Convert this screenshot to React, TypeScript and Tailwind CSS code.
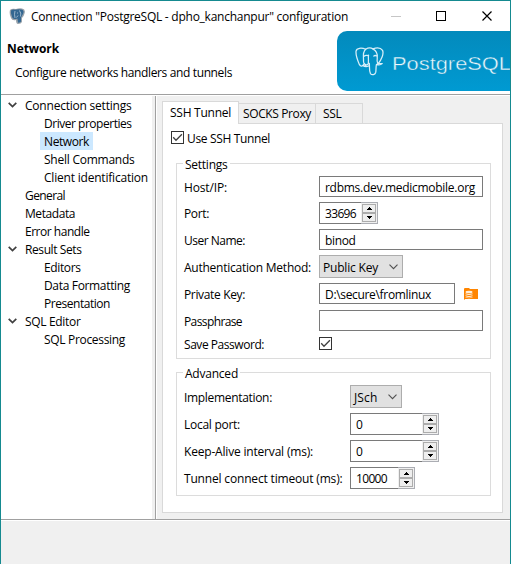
import { useLayoutEffect, useRef, useState, type ReactNode } from "react";

/** A run of text tracked so that it fills exactly `width` pixels. */
function Text({ children, width, className = "" }: { children: string; width: number; className?: string }) {
  const ref = useRef<HTMLSpanElement>(null);
  const [tracking, setTracking] = useState(0);
  useLayoutEffect(() => {
    if (ref.current) {
      const natural = ref.current.getBoundingClientRect().width;
      setTracking((width - natural) / children.length);
    }
  }, []);
  return (
    <span ref={ref} className={`inline-block shrink-0 pt-[2px] whitespace-pre ${className}`} style={{ letterSpacing: `${tracking}px` }}>
      {children}
    </span>
  );
}

function Elephant({ className }: { className: string }) {
  return (
    <svg viewBox="0 0 30 30" className={className} fill="none" stroke="currentColor" strokeWidth="1.3" strokeLinecap="round" strokeLinejoin="round">
      <path d="M9.500 17.500c-1.500 2.500-3.600 3.300-5 .5C2.500 13.500.7 7.500 1.100 4.200 1.700.8 7 .6 11 2.300c2-1.200 5.500-1.600 7.500-.4 3.500-1.300 8-1.300 10 1.600 1.600 3.500-1.300 10-4.800 14.200" />
      <path d="M11 2.300C8 5 8.500 9 8.800 12.500c.2 3-.8 4 1.500 5.500 1.500 1 3.500.5 3.500-1.500.4-3-.3-5.500.2-8M18.500 1.900c3.500 2 5 6 4.500 9.500-.4 2-.2 4 .7 6.300M9 9.800c1.500-1.300 3-1.500 5-.8M19.500 9.300c1-.8 2-.6 3 0M14.800 17c.5 3.500-.4 7.500 1.200 10.500 1.500 2 5 1.300 5.500-1.500.4-3 .1-6 .7-8 2 .7 4.500.5 6-.8-1.700.1-3.500.1-4.500-.6M12 18.500c-1 1.200-2.500 1-3.500.8 1.500 1.300 4.500 1.500 6.500-.3" />
    </svg>
  );
}

function Chevron() {
  return (
    <svg viewBox="0 0 9 6" className="h-[6px] w-[9px]" fill="none" stroke="#404040" strokeWidth="1.7">
      <path d="M.7 .8 4.500 4.500 8.300 .8" />
    </svg>
  );
}

function TreeItem({ label, width, open = false, child = false, selected = false }: { label: string; width: number; open?: boolean; child?: boolean; selected?: boolean }) {
  return (
    <div className="flex h-[18px] items-center">
      <div className={`flex shrink-0 ${child ? "w-[39px]" : "w-[21px]"} pl-[7px]`}>{open && <Chevron />}</div>
      <div className={`flex h-[18px] items-center ${child ? "px-1" : "pl-[3px]"} ${selected ? "bg-[#cce8ff]" : ""}`}>
        <Text width={width}>{label}</Text>
      </div>
    </div>
  );
}

function Check() {
  return (
    <svg viewBox="0 0 13 13" className="size-[13px] shrink-0">
      <rect x=".5" y=".5" width="12" height="12" fill="#fff" stroke="#333" />
      <path d="M2.200 6.300 5 9.200 10.900 3.300" fill="none" stroke="#404040" strokeWidth="1.300" />
    </svg>
  );
}

function Group({ title, titleWidth, className, children }: { title: string; titleWidth: number; className: string; children: ReactNode }) {
  return (
    <div className={`relative flex w-[315px] flex-col border border-[#dcdcdc] pl-[7px] ${className}`}>
      <div className="absolute -top-[9px] left-[6px] flex h-[18px] items-center bg-white pr-[2px] pl-[2px]">
        <Text width={titleWidth}>{title}</Text>
      </div>
      {children}
    </div>
  );
}

function Row({ label, width, className, wide = false, children }: { label: string; width: number; className: string; wide?: boolean; children: ReactNode }) {
  return (
    <div className={`flex items-center ${className}`}>
      <div className={`flex shrink-0 ${wide ? "w-[166px]" : "w-[135px]"}`}>
        <Text width={width}>{label}</Text>
      </div>
      {children}
    </div>
  );
}

function Field({ value = "", width = 0, className }: { value?: string; width?: number; className: string }) {
  return (
    <div className={`flex h-[21px] items-center border border-[#7a7a7a] bg-white pl-[5px] ${className}`}>
      {value && <Text width={width}>{value}</Text>}
    </div>
  );
}

function Spinner({ value, width, className }: { value: string; width: number; className: string }) {
  return (
    <div className={`flex h-[22px] ${className}`}>
      <div className="flex grow items-center border border-r-0 border-[#7a7a7a] pl-[5px]">
        <Text width={width}>{value}</Text>
      </div>
      <div className="flex w-[17px] flex-col border border-l-0 border-[#abadb3] bg-[#f0f0f0] pt-px pl-px">
        <div className="flex h-[9px] w-[14px] items-center justify-center border border-[#acacac] bg-[#eeeeee]">
          <svg viewBox="0 0 5 3" className="h-[3px] w-[5px]" shapeRendering="crispEdges"><path d="M2 0h1v1h1v1h1v1H0V2h1V1h1z" /></svg>
        </div>
        <div className="flex h-[9px] w-[14px] items-center justify-center border border-[#acacac] bg-[#eeeeee]">
          <svg viewBox="0 0 5 3" className="h-[3px] w-[5px]" shapeRendering="crispEdges"><path d="M0 0h5v1H4v1H3v1H2V2H1V1H0z" /></svg>
        </div>
      </div>
    </div>
  );
}

function Select({ value, width, className }: { value: string; width: number; className: string }) {
  return (
    <div className={`flex h-[23px] items-center justify-between border border-[#adadad] bg-[#e1e1e1] pr-1 pl-[3px] ${className}`}>
      <Text width={width}>{value}</Text>
      <svg viewBox="0 0 9 6" className="h-[6px] w-[9px]" fill="none" stroke="#505050" strokeWidth="1.100">
        <path d="M.5 .7 4.500 4.700 8.500 .7" />
      </svg>
    </div>
  );
}

export default function App() {
  return (
    <div className="flex h-[564px] w-[511px] flex-col overflow-hidden border-x border-t border-[#158a90] bg-white font-['Open_Sans','Noto_Sans',sans-serif] text-[12px] leading-[18px] text-black">
      <header className="flex h-[30px] shrink-0 items-center pl-2">
        <svg viewBox="0 0 16 16" className="size-4 shrink-0">
          <path d="M1 2Q3 0 7 1q3-1 6-.5 4 1 2.500 5Q15 8 13 10v4q-1 2-4 2-2 0-2-4-4 1-5-2Q0 6 1 2Z" fill="#9aa3ab" />
          <path d="M2 2.500Q4 .8 6 1.800 9 .7 12.500 1.500q3 .8 1.700 4L12 9.500v4q-1 1.500-3 1l-.6-4Q4 12 3 9 1.300 5 2 2.500Z" fill="#336791" />
          <path d="M6 3q-1 3 0 7M10.500 2.500q2 3 1 6M7.500 9.500l1.500-2M8 5h1M11 5h1" fill="none" stroke="#b4c8d8" strokeWidth=".8" />
        </svg>
        <Text width={317} className="ml-[6px]">Connection "PostgreSQL - dpho_kanchanpur" configuration</Text>
        <svg viewBox="0 0 102 12" className="ml-[43px] h-3 w-[102px] shrink-0" fill="none" stroke="#000">
          <path d="M0 6.500h10" stroke="#c6c6c6" />
          <rect x="45.500" y="1.500" width="9" height="9" />
          <path d="M91.500 1.500l9 9M100.500 1.500l-9 9" strokeWidth="1.200" />
        </svg>
      </header>
      <section className="flex h-[63px] shrink-0 justify-between">
        <div className="flex flex-col pt-[7px] pl-[6px]">
          <Text width={52} className="self-start font-bold">Network</Text>
          <Text width={217} className="mt-[4px] ml-2 self-start">Configure networks handlers and tunnels</Text>
        </div>
        <div className="flex h-[60px] w-[173px] items-start rounded-l-[10px] bg-linear-to-b from-[#038abc] to-[#009ad2] pt-4 pl-[18px] text-[#d8eff9]">
          <Elephant className="size-[29px] shrink-0" />
          <svg viewBox="0 0 117 29" className="ml-[8px] h-[29px] w-[117px] shrink-0 overflow-visible">
            <text x="0" y="23" textLength="119" lengthAdjust="spacingAndGlyphs" fill="#eef9fd" stroke="#0392c6" strokeWidth=".4" className="font-['Liberation_Sans',sans-serif] text-[18px]">PostgreSQL</text>
          </svg>
        </div>
      </section>
      <main className="flex h-[426px] shrink-0 border-y border-[#a0a0a0]">
        <nav className="w-[151px] shrink-0 pt-px">
          <TreeItem label="Connection settings" width={106.500} open />
          <TreeItem label="Driver properties" width={87.500} child />
          <TreeItem label="Network" width={45} child selected />
          <TreeItem label="Shell Commands" width={90.500} child />
          <TreeItem label="Client identification" width={104} child />
          <TreeItem label="General" width={40} />
          <TreeItem label="Metadata" width={50} />
          <TreeItem label="Error handle" width={64.500} />
          <TreeItem label="Result Sets" width={56.500} open />
          <TreeItem label="Editors" width={36.500} child />
          <TreeItem label="Data Formatting" width={86} child />
          <TreeItem label="Presentation" width={66} child />
          <TreeItem label="SQL Editor" width={55.500} open />
          <TreeItem label="SQL Processing" width={81} child />
        </nav>
        <div className="mt-px w-[4px] shrink-0 border-r border-[#a0a0a0] bg-[#f0f0f0]" />
        <div className="mt-px ml-px flex grow flex-col bg-[#f0f0f0] pt-[5px] pl-[5px]">
          <div className="z-10 flex h-[23px] items-end">
            <div className="flex h-[23px] w-[77px] justify-start border border-b-0 border-[#d9d9d9] bg-white pl-[7px]">
              <Text width={61}>SSH Tunnel</Text>
            </div>
            <div className="mb-px flex h-[20px] w-[77px] border-t border-r border-[#d9d9d9] pl-1">
              <Text width={68} className="-mt-px">SOCKS Proxy</Text>
            </div>
            <div className="mb-px flex h-[20px] w-[47px] border-t border-r border-[#d9d9d9] pl-[7px]">
              <Text width={18.500} className="-mt-px">SSL</Text>
            </div>
          </div>
          <div className="-mt-px flex h-[390px] w-[341px] flex-col border border-[#d9d9d9] bg-white pt-[7px] pl-2">
            <div className="flex h-[13px] items-center gap-[3px]">
              <Check />
              <Text width={83}>Use SSH Tunnel</Text>
            </div>
            <Group title="Settings" titleWidth={42.500} className="mt-[19px] ml-[5px] h-[196px] pt-3">
              <Row label="Host/IP:" width={43} className="h-[21px]"><Field value="rdbms.dev.medicmobile.org" width={150} className="w-[164px]" /></Row>
              <Row label="Port:" width={25} className="mt-[5px] h-[22px]"><Spinner value="33696" width={31} className="w-[59px]" /></Row>
              <Row label="User Name:" width={61} className="mt-[5px] h-[21px]"><Field value="binod" width={30.500} className="w-[164px]" /></Row>
              <Row label="Authentication Method:" width={127} className="mt-[5px] h-[23px]"><Select value="Public Key" width={55} className="w-[84px]" /></Row>
              <Row label="Private Key:" width={61} className="mt-[5px] h-[21px]">
                <Field value="D:\secure\fromlinux" width={106} className="w-[136px]" />
                <svg viewBox="0 0 14 12" className="ml-[9px] h-3 w-[14px] shrink-0">
                  <path d="M0 1.200Q0 0 1 0h4l1 1h8v10H1.200L0 12Z" fill="#ff8500" />
                  <g fill="#fff0dc">
                    <ellipse cx="5" cy="4" rx="3.500" ry="1.300" />
                    <path d="M1.500 5.300q3.500 1.400 7 0v1q-3.500 1.400-7 0zM1.500 7.200q3.500 1.400 7 0v1q-3.500 1.400-7 0zM1.500 9q3.500 1.400 7 0v.6q-3.500 1.400-7 0z" />
                  </g>
                </svg>
              </Row>
              <Row label="Passphrase" width={58} className="mt-[6px] h-[21px]"><Field className="w-[164px]" /></Row>
              <Row label="Save Password:" width={80} className="mt-[6px] h-[13px]"><Check /></Row>
            </Group>
            <Group title="Advanced" titleWidth={53} className="mt-[13px] ml-[5px] h-[124px] pt-3">
              <Row wide label="Implementation:" width={88} className="h-[23px]"><Select value="JSch" width={23.500} className="w-[52px]" /></Row>
              <Row wide label="Local port:" width={56} className="mt-[5px] h-[22px]"><Spinner value="0" width={7} className="w-[89px]" /></Row>
              <Row wide label="Keep-Alive interval (ms):" width={129} className="mt-[5px] h-[22px]"><Spinner value="0" width={7} className="w-[89px]" /></Row>
              <Row wide label="Tunnel connect timeout (ms):" width={158.500} className="mt-[5px] h-[22px]"><Spinner value="10000" width={31} className="w-[65px]" /></Row>
            </Group>
          </div>
        </div>
      </main>
      <footer className="mt-px grow bg-[#f0f0f0]" />
    </div>
  );
}
